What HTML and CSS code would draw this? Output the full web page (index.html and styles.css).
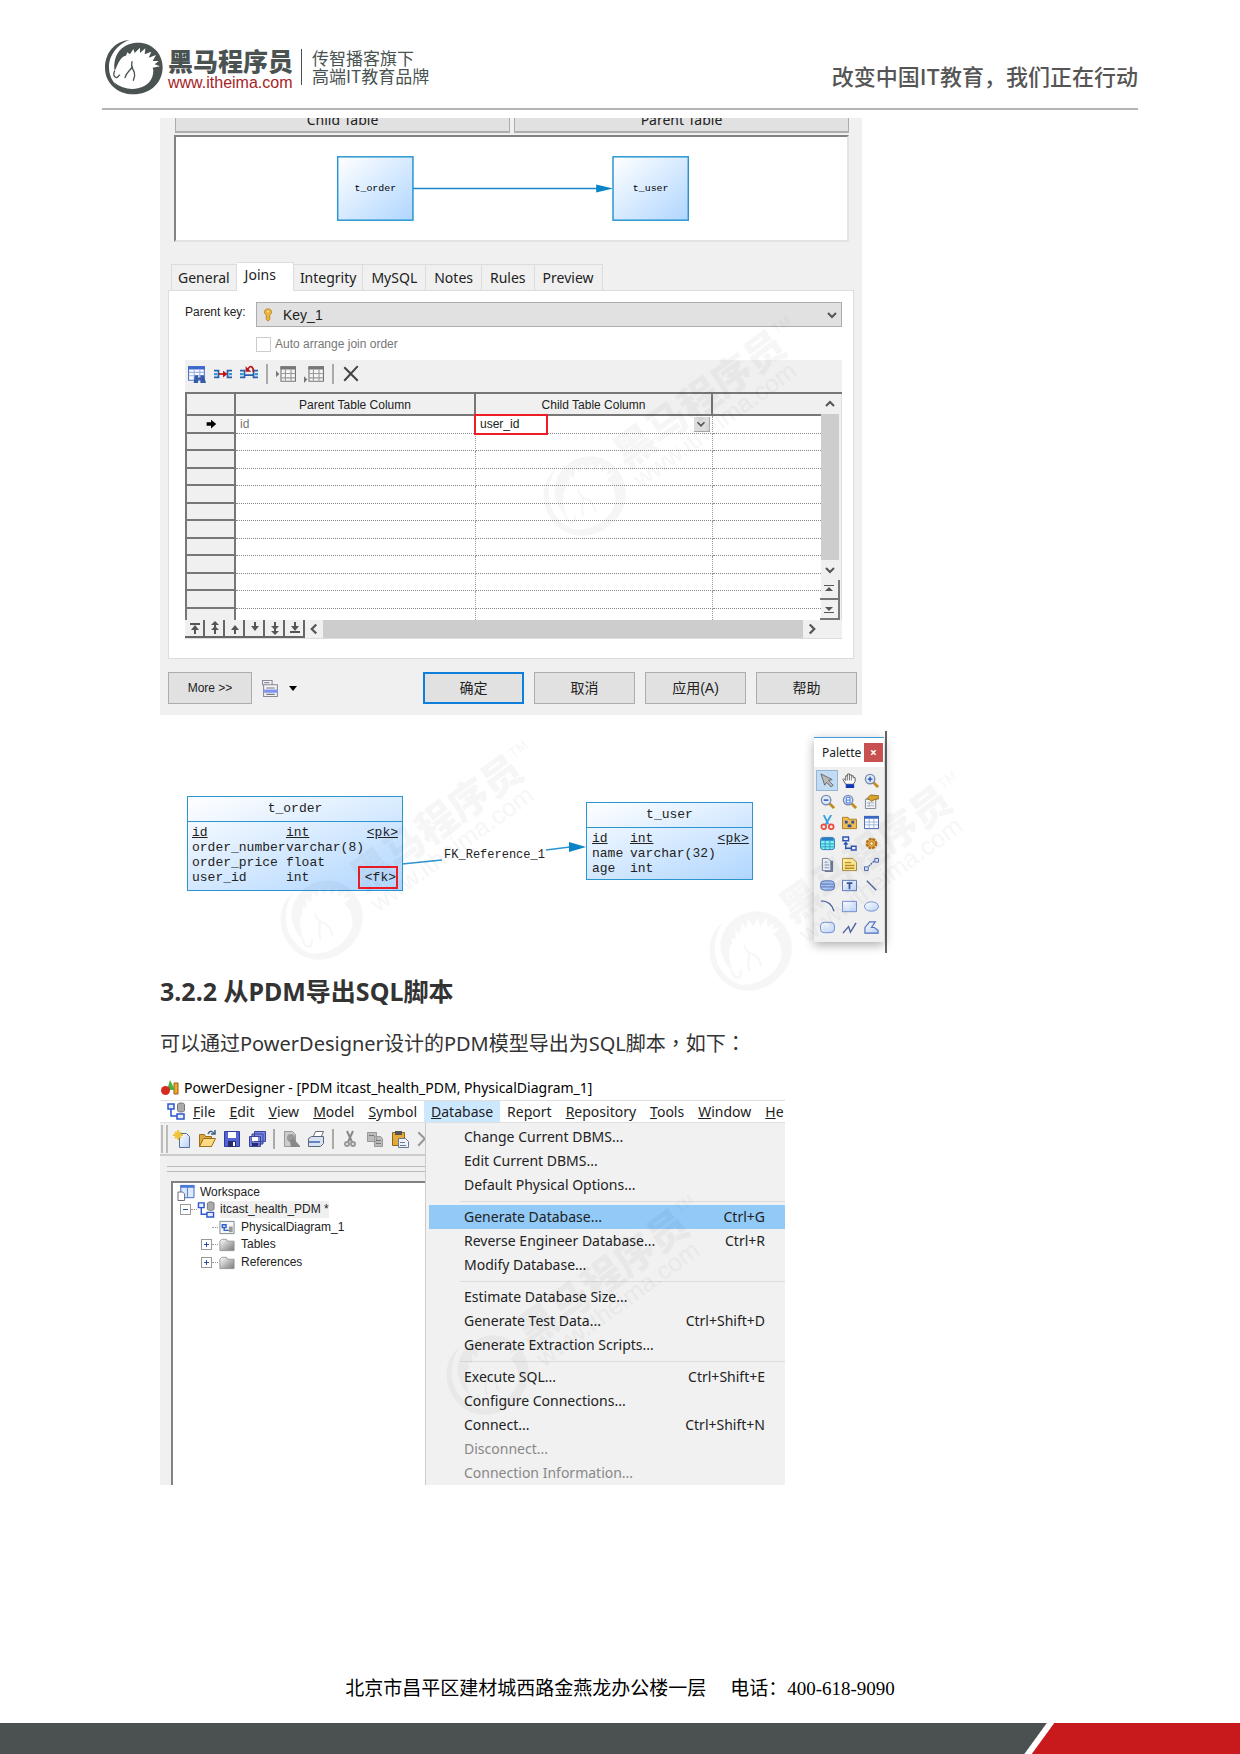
FILE: index.html
```html
<!DOCTYPE html>
<html lang="zh-CN">
<head>
<meta charset="utf-8">
<meta name="viewport" content="width=device-width, initial-scale=1">
<title>从PDM导出SQL脚本</title>
<link rel="stylesheet" href="styles.css">
</head>
<body>
<svg class="sprite" aria-hidden="true">
  <defs>
    <linearGradient id="entity" x1="0" y1="0" x2="1" y2="1"><stop offset="0" stop-color="#fff"/><stop offset="1" stop-color="#b0d6ff"/></linearGradient>
    <linearGradient id="sheet" x1="0" y1="0" x2="1" y2="1"><stop offset="0" stop-color="#fff"/><stop offset="1" stop-color="#b9d0f5"/></linearGradient>
    <linearGradient id="folderGrey" x1="0" y1="0" x2="1" y2="1"><stop offset="0" stop-color="#fff"/><stop offset="1" stop-color="#777"/></linearGradient>
  </defs>
  <symbol id="horse" viewBox="42 54 180 172">
    <path fill="currentColor" d="M120 58C72 62 45 100 45 142C45 190 85 222 130 222C94 212 58 188 57 142C56 104 84 70 120 58Z"/>
    <path fill="currentColor" d="M145 67C185 67 218 98 218 140C218 188 180 222 130 222C104 220 84 208 72 186C94 204 120 209 144 204C172 198 190 180 190 150L188 142L210 138L194 132L206 122L188 122L198 104L176 112L184 94L164 102L166 84L150 98L150 82L134 98L130 86L120 102L112 96L108 106C96 108 90 118 84 130L74 152C70 130 76 100 96 84C110 72 128 67 145 67Z"/>
    <path fill="none" stroke="currentColor" stroke-width="4" stroke-linecap="round" d="M126 124C121 140 128 144 133 156C136 168 132 174 130 180M125 142C120 152 110 154 105 172M74 152C69 160 71 170 79 172C85 172 84 166 89 164"/>
  </symbol>
  <symbol id="i-find" viewBox="0 0 16 16"><path fill="#fff" stroke="#5274c8" d="M.5 1.500h14v12h-14z"/><path fill="#3d66cf" d="M0 1h15v3H0z"/><path stroke="#9db4e4" fill="none" d="M1 6.500h13M1 9.500h13M5.500 4v9M10.500 4v9"/><path fill="#365ba8" d="M5 16l1-7h3v2h2V9h3l2 7h-5v-3H9v3z"/></symbol>
  <symbol id="i-link" viewBox="0 0 16 16"><path fill="none" stroke="#2b5fae" stroke-width="1.500" d="M0 5h4v6H0M16 5h-4v6h4"/><path fill="#2c9be0" d="M0 7h3v2H0zM13 7h3v2h-3z"/><path stroke="#c41212" stroke-width="1.500" d="M4 8h6"/><path fill="#c41212" d="M8 5l4 3-4 3z"/></symbol>
  <symbol id="i-unlink" viewBox="0 0 16 16"><path fill="none" stroke="#2b5fae" stroke-width="1.500" d="M0 5h4v6H0M16 5h-4v6h4M4 9h8"/><path fill="#2c9be0" d="M0 7h3v2H0zM13 7h3v2h-3z"/><path fill="none" stroke="#b81414" stroke-width="1.500" d="M7 4c2-5 5-2 5 2"/><path fill="#b81414" d="M5 1v5h5z"/></symbol>
  <symbol id="i-insert" viewBox="0 0 18 16"><path fill="#f4f4f4" stroke="#777" d="M4.500 1.500h13v13h-13z"/><path fill="#777" d="M4 1h14v3H4zM0 5l3 3-3 3z"/><path stroke="#999" d="M5 7.500h12M5 11.500h12M8.500 4v10M13.500 4v10"/></symbol>
  <symbol id="i-append" viewBox="0 0 18 16"><path fill="#f4f4f4" stroke="#777" d="M4.500 1.500h13v13h-13z"/><path fill="#777" d="M4 1h14v3H4zM0 10l3 3-3 3z"/><path stroke="#999" d="M5 7.500h12M5 11.500h12M8.500 4v10M13.500 4v10"/></symbol>
  <symbol id="i-x" viewBox="0 0 16 16"><path fill="none" stroke="#444" stroke-width="1.800" d="M2 2l12 12M14 1L2 14"/></symbol>
  <symbol id="i-key" viewBox="0 0 16 16"><path fill="#eab43c" stroke="#bd8420" d="M6 8C2 5 4 1 8 1s6 4 2 7v5l-2 2-2-2z"/><circle cx="8" cy="4" r="1" fill="#fff6c0"/></symbol>
  <symbol id="i-arrow" viewBox="0 0 16 16"><path fill="#000" d="M3 6h5V3l6 5-6 5v-3H3z"/></symbol>
  <symbol id="n-first" viewBox="0 0 16 16"><path fill="#555" d="M3 3h10v2H3zM8 5l4 5H9v4H7v-4H4z"/></symbol>
  <symbol id="n-pageup" viewBox="0 0 16 16"><path fill="#555" d="M8 1l4 4H9v2l3 3H9v4H7v-4H4l3-3V5H4z"/></symbol>
  <symbol id="n-up" viewBox="0 0 16 16"><path fill="#555" d="M8 5l4 5H9v4H7v-4H4z"/></symbol>
  <symbol id="n-down" viewBox="0 0 16 16"><path fill="#555" d="M8 11l4-5H9V2H7v4H4z"/></symbol>
  <symbol id="n-pagedown" viewBox="0 0 16 16"><path fill="#555" d="M8 15l4-4H9V9l3-3H9V2H7v4H4l3 3v2H4z"/></symbol>
  <symbol id="n-last" viewBox="0 0 16 16"><path fill="#555" d="M3 13h10v-2H3zM8 11l4-5H9V2H7v4H4z"/></symbol>
  <symbol id="c-up" viewBox="0 0 16 16"><path fill="none" stroke="#555" stroke-width="2" d="M4 10l4-4 4 4"/></symbol>
  <symbol id="c-down" viewBox="0 0 16 16"><path fill="none" stroke="#555" stroke-width="2" d="M4 6l4 4 4-4"/></symbol>
  <symbol id="c-left" viewBox="0 0 16 16"><path fill="none" stroke="#555" stroke-width="2" d="M10 4L6 8l4 4"/></symbol>
  <symbol id="c-right" viewBox="0 0 16 16"><path fill="none" stroke="#555" stroke-width="2" d="M6 4l4 4-4 4"/></symbol>
  <symbol id="v-top" viewBox="0 0 16 16"><path fill="#555" d="M3 4h10v1H3zM8 6l4 4H4z"/></symbol>
  <symbol id="v-end" viewBox="0 0 16 16"><path fill="#555" d="M3 12h10v-1H3zM8 10l4-4H4z"/></symbol>
  <symbol id="i-props" viewBox="0 0 16 16"><path fill="#f4f4f4" stroke="#889" d="M.5.500h9v4h-9zM1.500 4.500h13v11h-13z"/><path fill="#7f94f0" d="M2 9h13v3H2z"/><path stroke="#778" d="M4 7.500h8M4 13.500h8M2 2.500h5"/></symbol>
  <symbol id="p-pointer" viewBox="0 0 16 16"><path fill="#b9b9b9" stroke="#666" d="M1 1l12 6-4 1 5 5-2 2-5-5-2 3z"/></symbol>
  <symbol id="p-hand" viewBox="0 0 16 16"><path fill="#fff" stroke="#555" d="M4 12L1 7l1-1 2 2V3h2V1h2v1h2v1h2v2h2v4l-2 3z"/><path stroke="#777" d="M6 3v5M8 2v6M10 3v5"/><path fill="#1238b4" d="M4 12h9v4H4z"/></symbol>
  <symbol id="p-lens" viewBox="0 0 16 16"><path stroke="#c38a1c" stroke-width="3" d="M10 10l5 5"/><circle cx="6.500" cy="6.500" r="5" fill="#dcebff" stroke="#7d8da8" stroke-width="1.500"/></symbol>
  <symbol id="p-zoomin" viewBox="0 0 16 16"><use href="#p-lens"/><path stroke="#274fa8" stroke-width="1.500" d="M4 6.500h5M6.500 4v5"/></symbol>
  <symbol id="p-zoomout" viewBox="0 0 16 16"><use href="#p-lens"/><path stroke="#274fa8" stroke-width="1.500" d="M4 6.500h5"/></symbol>
  <symbol id="p-zoompage" viewBox="0 0 16 16"><use href="#p-lens"/><path fill="#fff" stroke="#3467e8" d="M4.500 3.500h4v6h-4zM5 6.500h3"/></symbol>
  <symbol id="p-open" viewBox="0 0 16 16"><path fill="#f2f4f8" stroke="#7b8494" d="M1.500 5.500h11v10h-11z"/><path stroke="#a9b3c4" d="M3 9.500h8M3 12.500h8M5.500 8v6"/><path fill="#d9a32e" stroke="#8f6c1e" d="M3 5l4-4 9 1v3l-5 1-3 2-2-2z"/></symbol>
  <symbol id="p-cut" viewBox="0 0 16 16"><path stroke="#36a3e0" stroke-width="2" d="M4 0l5 10M12 0L6 10"/><g fill="none" stroke="#ec4c3c" stroke-width="1.800"><circle cx="4" cy="12.500" r="2.500"/><circle cx="12" cy="12.500" r="2.500"/></g></symbol>
  <symbol id="p-package" viewBox="0 0 16 16"><path fill="#f0bd4f" stroke="#a97c1c" d="M.5 2.500h6l1 2h8v10H.5z"/><path fill="#2e4ba8" d="M3 6h3v3H3zM10 6h3v3h-3zM6 10h4v3H6z"/></symbol>
  <symbol id="p-table" viewBox="0 0 16 16"><path fill="#fff" stroke="#3c5fae" d="M.5 1.500h15v13H.5z"/><path fill="#3c64c4" d="M0 1h16v3H0z"/><path stroke="#9cb2e0" d="M1 7.500h14M1 10.500h14M5.500 4v10M10.500 4v10"/></symbol>
  <symbol id="p-view" viewBox="0 0 16 16"><rect x=".5" y="1.500" width="15" height="13" rx="3" fill="#7ff0ee" stroke="#2a73b8"/><path fill="#2a7cc4" d="M2 2h12l1 3H1z"/><path stroke="#2a9cc4" d="M1 8.500h14M1 11.500h14M5.500 5v9M10.500 5v9"/></symbol>
  <symbol id="p-ref" viewBox="0 0 16 16"><path fill="#eaf1ff" stroke="#2f54b8" stroke-width="1.500" d="M1 1h6v4H1zM10 11h5v4h-5z"/><path fill="none" stroke="#2f54b8" stroke-width="1.500" d="M4 14V6M4 13h6M2 9l2-2 2 2"/></symbol>
  <symbol id="p-proc" viewBox="0 0 16 16"><circle cx="8" cy="8" r="5" fill="#f2b24c" stroke="#b87518" stroke-width="2.500" stroke-dasharray="3 1"/><circle cx="8" cy="8" r="2" fill="#fff0c8" stroke="#b87518"/></symbol>
  <symbol id="p-file" viewBox="0 0 16 16"><path fill="#6d7a96" d="M11 4h3v12H5v-2h6z"/><path fill="#eef2f8" stroke="#6d7a96" d="M2.500 1.500h6l3 3v10h-9z"/><path stroke="#7c8dab" d="M5 5.500h3M5 8.500h5M5 11.500h5"/></symbol>
  <symbol id="p-note" viewBox="0 0 16 16"><path fill="#ffeb9a" stroke="#a58a3c" d="M.5 1.500h11l4 4v9H.5z"/><path stroke="#b98b1a" stroke-width="1.500" d="M3 6h7M3 9h10M3 12h10"/></symbol>
  <symbol id="p-trace" viewBox="0 0 16 16"><path fill="#dbe6ff" stroke="#4560a8" d="M.5 10.500h4v4h-4zM11.500 1.500h4v4h-4z"/><path stroke="#4560a8" stroke-width="1.500" stroke-dasharray="2 1" d="M5 10l6-6"/></symbol>
  <symbol id="p-title" viewBox="0 0 16 16"><rect x=".5" y="3" width="15" height="10" rx="4" fill="#a9c3f3" stroke="#5474b8"/><path stroke="#5474b8" d="M1 6.500h14M1 9.500h14"/></symbol>
  <symbol id="p-text" viewBox="0 0 16 16"><path fill="url(#sheet)" stroke="#5474b8" d="M.5 2.500h15v11H.5z"/><path fill="none" stroke="#3656a4" stroke-width="1.800" d="M5 5.500h6M8 5.500V12"/></symbol>
  <symbol id="p-line" viewBox="0 0 16 16"><path stroke="#4f62a0" stroke-width="1.500" d="M3 3l10 10"/></symbol>
  <symbol id="p-arc" viewBox="0 0 16 16"><path fill="none" stroke="#4f62a0" stroke-width="1.500" d="M1 2c7 0 12 4 14 11"/></symbol>
  <symbol id="p-rect" viewBox="0 0 16 16"><path fill="url(#sheet)" stroke="#6c8bd0" d="M.5 2.500h15v11H.5z"/></symbol>
  <symbol id="p-ellipse" viewBox="0 0 16 16"><ellipse cx="8" cy="8" rx="7.500" ry="5" fill="url(#sheet)" stroke="#6c8bd0"/></symbol>
  <symbol id="p-round" viewBox="0 0 16 16"><rect x=".5" y="2.500" width="15" height="11" rx="4" fill="url(#sheet)" stroke="#6c8bd0"/></symbol>
  <symbol id="p-poly" viewBox="0 0 16 16"><path fill="none" stroke="#4f62a0" stroke-width="1.500" d="M1 14l6-7 2 6 6-10"/></symbol>
  <symbol id="p-polygon" viewBox="0 0 16 16"><path fill="url(#sheet)" stroke="#4f6fc0" stroke-width="1.200" d="M1 14V8l5-6h6l-4 6h3l4 3v3z"/></symbol>
  <symbol id="w-app" viewBox="0 0 18 16"><path fill="#f1a62e" stroke="#9c5d10" d="M13 3h4v11h-4z"/><path fill="#47b347" d="M9 0l5 10H6z"/><circle cx="4.500" cy="10.500" r="4.500" fill="#d42a22"/></symbol>
  <symbol id="w-model" viewBox="0 0 18 18"><path fill="#e6edff" stroke="#2d55cc" stroke-width="1.500" d="M1 2h6v5H1zM10 12h7v5h-7z"/><path fill="none" stroke="#2d55cc" stroke-width="1.500" d="M4 7v7h6"/><path fill="#aaa" stroke="#777" d="M10.500 2.500c0-2 7-2 7 0v6c0 2-7 2-7 0z"/></symbol>
  <symbol id="w-new" viewBox="0 0 18 18"><path fill="url(#sheet)" stroke="#56709c" d="M6.500 3.500h7l3 3v11h-10z"/><path stroke="#f0c437" stroke-width="2" d="M5 0v10M0 5h10M2 2l6 6M8 2L2 8"/></symbol>
  <symbol id="w-open" viewBox="0 0 18 18"><path fill="#e0a83c" stroke="#9a6f1d" d="M1.500 16.500v-12h5l1 2h6v10z"/><path fill="#ffd984" stroke="#9a6f1d" d="M1.500 16.500l4-8h12l-4 8z"/><path fill="none" stroke="#3d5d80" stroke-width="1.500" d="M10 4c2-4 5-3 6 0M13 4h4V0"/></symbol>
  <symbol id="w-save" viewBox="0 0 18 18"><path fill="#5563d4" stroke="#323c96" d="M1.500 1.500h15v15h-15z"/><path fill="#fff" d="M5 2h8v6H5z"/><path fill="#252d70" d="M5 11h8v6H5z"/><path fill="#fff" d="M10 12h2v4h-2z"/></symbol>
  <symbol id="w-saveall" viewBox="0 0 18 18"><path fill="#7a86e0" stroke="#3a4499" d="M6.500 1.500h11v10h-11zM4 4h11v10H4zM1.500 6.500h11v10h-11z"/><path fill="#fff" d="M4 7h6v4H4z"/><path fill="#252d70" d="M4 13h6v3H4z"/></symbol>
  <symbol id="w-preview" viewBox="0 0 18 18"><path fill="#ccc" stroke="#999" d="M2.500 1.500h8l3 3v12h-11z"/><circle cx="9" cy="8" r="4" fill="#999"/><path fill="#888" d="M8 11l3-3 7 8v1h-9z"/></symbol>
  <symbol id="w-print" viewBox="0 0 18 18"><path fill="#fff" stroke="#68717e" d="M5.500 8.500l3-7h8l-3 7z"/><path fill="#d9e2ee" stroke="#596579" d="M1.500 8.500l3-2h12v7l-3 3h-12z"/><path stroke="#6485c0" stroke-width="2" d="M2 12h11"/></symbol>
  <symbol id="w-cut" viewBox="0 0 18 18"><path stroke="#888" stroke-width="2" d="M6 1l5 11M12 1L7 12"/><g fill="none" stroke="#999" stroke-width="2"><circle cx="6" cy="14" r="2"/><circle cx="12" cy="14" r="2"/></g></symbol>
  <symbol id="w-copy" viewBox="0 0 18 18"><path fill="#bbb" stroke="#999" d="M1.500 2.500h9v9h-9zM8.500 6.500h6l2 2v8h-8z"/><path stroke="#777" d="M3 5.500h5M10 10.500h5M10 13.500h5"/></symbol>
  <symbol id="w-paste" viewBox="0 0 18 18"><path fill="#e4a936" stroke="#8c6720" d="M1.500 2.500h12v13h-12z"/><path fill="#555" d="M4 1h7v4H4z"/><path fill="#eef3fb" stroke="#687a98" d="M7.500 8.500h7l3 3v6h-10z"/><path stroke="#687a98" d="M9 12.500h5M9 15.500h6"/></symbol>
  <symbol id="t-space" viewBox="0 0 18 18"><path fill="#dce8fc" stroke="#3c68c4" d="M3.500 1.500h14v13h-14z"/><path fill="#4a7ad8" d="M3 1h15v3H3zM10 4h1v10h-1z"/><path fill="#fff" stroke="#667" d="M.5 8.500h5l2 2v7h-7z"/></symbol>
  <symbol id="t-diagram" viewBox="0 0 18 18"><path fill="#f4f6fa" stroke="#788" d="M1.500 2.500h15v13h-15z"/><path fill="none" stroke="#2d62cc" stroke-width="1.500" d="M4 6h4v3H4zM6 9v3h5"/><path fill="#999" d="M11 8h4v6h-4z"/></symbol>
  <symbol id="t-folder" viewBox="0 0 18 18"><path fill="url(#folderGrey)" stroke="#999" d="M1.500 15.500v-10l2-2h5l1 2h7v10z"/></symbol>
</svg>

<div class="page">
  <header class="masthead">
    <a class="brand" href="#">
      <svg class="brand-mark"><use href="#horse"/></svg>
      <span class="brand-names"><span class="brand-cn">黑马程序员</span><span class="brand-url">www.itheima.com</span></span>
      <span class="brand-slogan"><span>传智播客旗下</span><span>高端IT教育品牌</span></span>
    </a>
    <p class="tagline">改变中国IT教育，我们正在行动</p>
  </header>

  <main class="content">
    <section class="dialog" aria-label="Reference properties">
      <div class="ends"><button type="button">Child Table</button><button type="button">Parent Table</button></div>
      <svg class="join-canvas" viewBox="0 0 673 104" preserveAspectRatio="xMidYMid meet">
        <path stroke="#1c86c8" stroke-width="1.500" d="M236 52h190"/><path fill="#0a84c8" d="M422 48l17 4-17 4z"/>
        <g fill="url(#entity)" stroke="#2b95d2" stroke-width="1.500"><rect x="161" y="20" width="76" height="64"/><rect x="439" y="20" width="76" height="64"/></g>
        <g class="small-mono" text-anchor="middle"><text x="199" y="55">t_order</text><text x="477" y="55">t_user</text></g>
      </svg>
      <div class="tabs" role="tablist">
        <button role="tab">General</button><button role="tab" aria-selected="true">Joins</button><button role="tab">Integrity</button><button role="tab">MySQL</button><button role="tab">Notes</button><button role="tab">Rules</button><button role="tab">Preview</button>
      </div>
      <div class="tab-panel">
        <div class="field">
          <label for="parent-key">Parent key:</label>
          <div class="select-box"><select id="parent-key"><option>Key_1</option></select><svg class="select-key"><use href="#i-key"/></svg><svg class="select-arrow"><use href="#c-down"/></svg></div>
        </div>
        <div class="check"><input type="checkbox" id="auto"><label for="auto">Auto arrange join order</label></div>
        <div class="join-tools">
          <button aria-label="Find"><svg><use href="#i-find"/></svg></button><button aria-label="Join"><svg><use href="#i-link"/></svg></button><button aria-label="Unjoin"><svg><use href="#i-unlink"/></svg></button><i class="rule"></i>
          <button class="wide" aria-label="Insert row"><svg><use href="#i-insert"/></svg></button><button class="wide" aria-label="Add row"><svg><use href="#i-append"/></svg></button><i class="rule"></i><button aria-label="Delete"><svg><use href="#i-x"/></svg></button>
        </div>
        <div class="grid-box">
          <table class="joins">
            <thead><tr><th class="c-mark"></th><th class="c-parent">Parent Table Column</th><th class="c-child">Child Table Column</th><th></th></tr></thead>
            <tbody>
              <tr><th><svg class="row-arrow"><use href="#i-arrow"/></svg></th><td class="muted">id</td><td class="picked"><div class="cell"><span class="marked">user_id</span><button aria-label="Choose column"><svg><use href="#c-down"/></svg></button></div></td><td></td></tr>
              <tr><th></th><td></td><td></td><td></td></tr><tr><th></th><td></td><td></td><td></td></tr>
              <tr><th></th><td></td><td></td><td></td></tr><tr><th></th><td></td><td></td><td></td></tr>
              <tr><th></th><td></td><td></td><td></td></tr><tr><th></th><td></td><td></td><td></td></tr>
              <tr><th></th><td></td><td></td><td></td></tr><tr><th></th><td></td><td></td><td></td></tr>
              <tr><th></th><td></td><td></td><td></td></tr><tr><th></th><td></td><td></td><td></td></tr>
              <tr class="cut"><th></th><td></td><td></td><td></td></tr>
            </tbody>
          </table>
          <div class="v-scroll"><svg><use href="#c-up"/></svg><i class="thumb"></i><svg><use href="#c-down"/></svg><button aria-label="Top"><svg><use href="#v-top"/></svg></button><button aria-label="End"><svg><use href="#v-end"/></svg></button></div>
          <div class="h-scroll">
            <button aria-label="First"><svg><use href="#n-first"/></svg></button><button aria-label="Page up"><svg><use href="#n-pageup"/></svg></button><button aria-label="Up"><svg><use href="#n-up"/></svg></button><button aria-label="Down"><svg><use href="#n-down"/></svg></button><button aria-label="Page down"><svg><use href="#n-pagedown"/></svg></button><button aria-label="Last"><svg><use href="#n-last"/></svg></button>
            <svg><use href="#c-left"/></svg><i class="thumb"></i><svg><use href="#c-right"/></svg>
          </div>
        </div>
      </div>
      <div class="actions">
        <button class="more">More &gt;&gt;</button><svg class="props"><use href="#i-props"/></svg><i class="caret"></i>
        <div class="answers"><button class="default">确定</button><button>取消</button><button>应用(A)</button><button>帮助</button></div>
      </div>
    </section>

    <section class="diagram" aria-label="Physical diagram">
      <svg class="links" width="420" height="120"><path stroke="#2b95d2" stroke-width="1.500" d="M242 53l40-4M386 39l24-3"/><path fill="#0a84c8" d="M409 31l17 5-17 5z"/></svg>
      <div class="entity order">
        <h3>t_order</h3>
        <dl><dt><u>id</u></dt><dd><u>int</u></dd><dd class="tag"><u>&lt;pk&gt;</u></dd>
        <dt>order_number</dt><dd>varchar(8)</dd><dd></dd>
        <dt>order_price</dt><dd>float</dd><dd></dd>
        <dt>user_id</dt><dd>int</dd><dd class="tag"><span class="fk">&lt;fk&gt;</span></dd></dl>
      </div>
      <div class="link-name">FK_Reference_1</div>
      <div class="entity user">
        <h3>t_user</h3>
        <dl><dt><u>id</u></dt><dd><u>int</u></dd><dd class="tag"><u>&lt;pk&gt;</u></dd>
        <dt>name</dt><dd>varchar(32)</dd><dd></dd>
        <dt>age</dt><dd>int</dd><dd></dd></dl>
      </div>
      <div class="palette-side">
        <div class="palette">
          <div class="palette-title"><span>Palette</span><button aria-label="Close">×</button></div>
          <div class="palette-tools">
            <button class="on" aria-label="Pointer"><svg><use href="#p-pointer"/></svg></button><button aria-label="Grabber"><svg><use href="#p-hand"/></svg></button><button aria-label="Zoom in"><svg><use href="#p-zoomin"/></svg></button>
            <button aria-label="Zoom out"><svg><use href="#p-zoomout"/></svg></button><button aria-label="Fit page"><svg><use href="#p-zoompage"/></svg></button><button aria-label="Properties"><svg><use href="#p-open"/></svg></button>
            <button aria-label="Delete"><svg><use href="#p-cut"/></svg></button><button aria-label="Package"><svg><use href="#p-package"/></svg></button><button aria-label="Table"><svg><use href="#p-table"/></svg></button>
            <button aria-label="View"><svg><use href="#p-view"/></svg></button><button aria-label="Reference"><svg><use href="#p-ref"/></svg></button><button aria-label="Procedure"><svg><use href="#p-proc"/></svg></button>
            <button aria-label="File"><svg><use href="#p-file"/></svg></button><button aria-label="Note"><svg><use href="#p-note"/></svg></button><button aria-label="Traceability"><svg><use href="#p-trace"/></svg></button>
            <button aria-label="Title"><svg><use href="#p-title"/></svg></button><button aria-label="Text"><svg><use href="#p-text"/></svg></button><button aria-label="Line"><svg><use href="#p-line"/></svg></button>
            <button aria-label="Arc"><svg><use href="#p-arc"/></svg></button><button aria-label="Rectangle"><svg><use href="#p-rect"/></svg></button><button aria-label="Ellipse"><svg><use href="#p-ellipse"/></svg></button>
            <button aria-label="Rounded rectangle"><svg><use href="#p-round"/></svg></button><button aria-label="Polyline"><svg><use href="#p-poly"/></svg></button><button aria-label="Polygon"><svg><use href="#p-polygon"/></svg></button>
          </div>
        </div>
      </div>
    </section>

    <h2>3.2.2 从PDM导出SQL脚本</h2>
    <p class="lead">可以通过PowerDesigner设计的PDM模型导出为SQL脚本<span class="stop" lang="zh-TW">，</span>如下<span class="stop" lang="zh-TW">：</span></p>

    <section class="designer" aria-label="PowerDesigner">
      <div class="titlebar"><svg><use href="#w-app"/></svg><span>PowerDesigner - [PDM itcast_health_PDM, PhysicalDiagram_1]</span></div>
      <nav class="menubar">
        <svg><use href="#w-model"/></svg>
        <button><u>F</u>ile</button><button><u>E</u>dit</button><button><u>V</u>iew</button><button><u>M</u>odel</button><button><u>S</u>ymbol</button><button class="open"><u>D</u>atabase</button><button>Re<u>p</u>ort</button><button><u>R</u>epository</button><button><u>T</u>ools</button><button><u>W</u>indow</button><button><u>H</u>e</button>
      </nav>
      <div class="workarea">
        <div class="side">
          <div class="toolbar">
            <i class="grip"></i><svg><use href="#w-new"/></svg><svg><use href="#w-open"/></svg><svg><use href="#w-save"/></svg><svg><use href="#w-saveall"/></svg><i class="rule"></i><svg><use href="#w-preview"/></svg><svg><use href="#w-print"/></svg><i class="rule"></i><svg><use href="#w-cut"/></svg><svg><use href="#w-copy"/></svg><svg><use href="#w-paste"/></svg><svg class="faded"><use href="#i-x"/></svg>
          </div>
          <div class="dock"></div>
          <ul class="tree">
            <li><svg><use href="#t-space"/></svg><span>Workspace</span></li>
            <li class="l1"><i class="box minus"></i><i class="dots"></i><svg><use href="#w-model"/></svg><span class="current">itcast_health_PDM *</span></li>
            <li class="l2"><i class="box none"></i><i class="dots"></i><svg><use href="#t-diagram"/></svg><span>PhysicalDiagram_1</span></li>
            <li class="l2"><i class="box plus"></i><i class="dots"></i><svg><use href="#t-folder"/></svg><span>Tables</span></li>
            <li class="l2"><i class="box plus"></i><i class="dots"></i><svg><use href="#t-folder"/></svg><span>References</span></li>
          </ul>
        </div>
        <div class="menu">
          <button>Change Current DBMS...</button><button>Edit Current DBMS...</button><button>Default Physical Options...</button>
          <hr>
          <button class="hot">Generate Database...<kbd>Ctrl+G</kbd></button><button>Reverse Engineer Database...<kbd>Ctrl+R</kbd></button><button>Modify Database...</button>
          <hr>
          <button>Estimate Database Size...</button><button>Generate Test Data...<kbd>Ctrl+Shift+D</kbd></button><button>Generate Extraction Scripts...</button>
          <hr>
          <button>Execute SQL...<kbd>Ctrl+Shift+E</kbd></button><button>Configure Connections...</button><button>Connect...<kbd>Ctrl+Shift+N</kbd></button><button disabled>Disconnect...</button><button disabled>Connection Information...</button>
        </div>
      </div>
    </section>

    <div class="watermark wm-1" aria-hidden="true"><svg><use href="#horse"/></svg><div class="wm-text"><b>黑马程序员</b><span>www.itheima.com</span></div><small>TM</small></div>
    <div class="watermark wm-2" aria-hidden="true"><svg><use href="#horse"/></svg><div class="wm-text"><b>黑马程序员</b><span>www.itheima.com</span></div><small>TM</small></div>
    <div class="watermark wm-3" aria-hidden="true"><svg><use href="#horse"/></svg><div class="wm-text"><b>黑马程序员</b><span>www.itheima.com</span></div><small>TM</small></div>
    <div class="watermark wm-4" aria-hidden="true"><svg><use href="#horse"/></svg><div class="wm-text"><b>黑马程序员</b><span>www.itheima.com</span></div><small>TM</small></div>
  </main>

  <footer class="footer">
    <address><span>北京市昌平区建材城西路金燕龙办公楼一层</span><span>电话：400-618-9090</span></address>
    <div class="band"></div>
  </footer>
</div>
</body>
</html>
```
FILE: styles.css
```css
* { box-sizing: border-box; }
body { margin: 0; background: #fff; color: #333; font-family: "Noto Sans", "Noto Sans CJK SC", sans-serif; }
p, h2, h3, dl, dd, ul { margin: 0; padding: 0; }
button { margin: 0; padding: 0; border: 0; background: none; color: inherit; font: inherit; white-space: nowrap; }
svg { display: block; flex: none; }
.sprite { position: absolute; width: 0; height: 0; }

.page { display: flex; flex-direction: column; min-height: 100vh; overflow: hidden; }

/* Masthead */
.masthead { display: flex; justify-content: space-between; align-items: flex-end; height: 110px; margin: 0 102px; border-bottom: 2px solid #b4b4b4; }
.brand { display: flex; align-items: center; margin-bottom: 12px; color: #4a5352; text-decoration: none; font-family: "Noto Sans CJK SC", sans-serif; }
.brand-mark { width: 60px; height: 58px; margin: 0 4px 0 2px; }
.brand-names { display: flex; flex-direction: column; padding-top: 4px; }
.brand-cn { font-size: 25px; font-weight: 900; line-height: 28px; }
.brand-url { color: #a8231f; font: 16px/18px "Liberation Sans", sans-serif; }
.brand-slogan { display: flex; flex-direction: column; margin-left: 8px; padding-left: 10px; border-left: 1px solid #4a5352; font-size: 17px; line-height: 18px; }
.tagline { margin-bottom: 17px; color: #555; font: 500 22px/32px "Noto Sans CJK SC", sans-serif; }

/* Content column */
.content { position: relative; flex: 1; padding: 8px 102px 0 160px; }

/* Reference dialog */
.dialog { max-width: 702px; height: 597px; padding: 0 5px 0 8px; background: #f0f0f0; color: #222; font: 12px/16px "Liberation Sans", "Noto Sans CJK SC", sans-serif; overflow: hidden; }
.ends { display: flex; gap: 4px; margin: -10px 8px 2px 7px; }
.ends button { flex: 1; height: 25px; border: 1px solid #adadad; border-bottom-width: 2px; background: #e1e1e1; font: 14px/20px "Noto Sans", sans-serif; }
.join-canvas { width: calc(100% - 14px); height: 107px; margin: 0 8px 0 6px; border: 2px solid #828282; border-right-color: #e3e3e3; border-bottom-color: #e3e3e3; background: #fff; }
.small-mono { font: 10px "Liberation Mono", monospace; }
.tabs { display: flex; align-items: flex-end; height: 48px; padding-left: 3px; font: 14px/20px "Noto Sans", sans-serif; }
.tabs button { height: 26px; padding: 0 6px; border: 1px solid #dcdcdc; border-width: 1px 1px 0 0; }
.tabs button:first-child { border-left-width: 1px; }
.tabs button:nth-child(n+4) { padding: 0 8px; }
.tabs [aria-selected] { height: 29px; margin-bottom: -1px; padding: 0 17px 4px 8px; background: #fff; }
.tab-panel { height: 369px; padding: 11px 11px 0 16px; margin-right: 3px; border: 1px solid #dcdcdc; background: #fff; }
.field { display: flex; gap: 12px; }
.field label { padding-top: 2px; width: 59px; white-space: nowrap; }
.select-box { position: relative; flex: 1; }
.select-box select { display: block; width: 100%; height: 25px; padding: 0 26px; border: 1px solid #adadad; border-radius: 0; background: #e1e1e1; appearance: none; color: #222; font: 14px "Liberation Sans", sans-serif; }
.select-key { position: absolute; left: 5px; top: 6px; width: 14px; height: 14px; }
.select-arrow { position: absolute; right: 2px; top: 5px; width: 16px; height: 16px; }
.check { display: flex; align-items: center; gap: 4px; margin: 9px 0 8px 71px; color: #777; }
.check input { width: 15px; height: 15px; margin: 0; border: 1px solid #ccc; background: #fff; appearance: none; }
.join-tools { display: flex; align-items: center; gap: 8px; height: 32px; padding: 0 3px 4px; background: #f0f0f0; }
.join-tools svg { width: 18px; height: 18px; }
.join-tools .wide svg { width: 20px; }
.rule { width: 2px; height: 20px; background: #aaa; }
.grid-box { display: grid; grid-template-columns: 1fr 21px; border-top: 2px solid #777; background: #f0f0f0; }
.joins { width: 100%; table-layout: fixed; border-collapse: separate; border-spacing: 0; background: #fff; color: #222; }
.joins th, .joins td { height: 18px; padding: 0; line-height: 15px; font-weight: 400; }
.joins tr:nth-child(even) th, .joins tr:nth-child(even) td { height: 17px; }
.joins tr.cut th, .joins tr.cut td { height: 11px; border-bottom: 0; }
.joins thead tr th { height: 22px; padding-top: 2px; border-right: 2px solid #777; border-bottom: 2px solid #777; background: #f0f0f0; }
.joins thead th:last-child { border-right: 0; }
.c-mark { width: 51px; }
.c-parent { width: 240px; }
.c-child { width: 237px; }
.joins th:first-child { border-left: 2px solid #777; border-right: 2px solid #777; border-bottom: 2px solid #777; background: #f0f0f0; }
.joins td { padding-left: 4px; border-right: 1px dotted #999; border-bottom: 1px dotted #888; }
.joins td:last-child { border-right: 0; }
.joins .muted { color: #777; }
.joins .picked { padding: 0 2px 0 0; }
.row-arrow { width: 16px; height: 14px; margin: 0 auto; }
.cell { display: flex; justify-content: space-between; align-items: center; height: 15px; }
.marked { width: 74px; margin: -3px 0 -3px -2px; padding: 0 4px; border: 2px solid #ee1c25; line-height: 17px; }
.cell button { width: 16px; height: 15px; border: 1px solid #aaa; border-width: 0 1px 1px 0; background: #ddd; }
.cell svg { width: 14px; height: 14px; }
.v-scroll { display: flex; flex-direction: column; align-items: center; padding: 0 2px 0 0; border-right: 1px solid #ddd; }
.v-scroll > svg { width: 16px; height: 20px; }
.v-scroll .thumb { flex: 1; width: 18px; background: #cdcdcd; }
.v-scroll button { width: 20px; height: 20px; padding-left: 1px; border: solid #777; border-width: 0 2px 2px 0; }
.v-scroll button svg, .h-scroll button svg { width: 16px; height: 16px; }
.h-scroll { grid-column: 1 / -1; display: flex; align-items: stretch; height: 19px; padding-right: 21px; border-bottom: 1px solid #ddd; }
.h-scroll button { width: 20px; padding-left: 2px; border: solid #666; border-width: 0 2px 2px 0; }
.h-scroll > svg { width: 18px; height: 18px; }
.h-scroll .thumb { flex: 1; background: #cdcdcd; }
.actions { display: flex; align-items: center; margin-top: 13px; }
.actions button { height: 32px; border: 1px solid #adadad; background: #e1e1e1; font-size: 14px; }
.actions .more { width: 84px; font-size: 12px; }
.props { width: 17px; height: 17px; margin: 0 10px; }
.caret { border: 4px solid transparent; border-top: 5px solid #000; border-bottom: 0; }
.answers { display: flex; gap: 10px; margin-left: auto; }
.answers button { width: 101px; }
.answers .default { border: 2px solid #0f7fdc; }

/* Entity diagram */
.diagram { position: relative; display: flex; align-items: flex-start; max-width: 727px; height: 223px; margin-top: 16px; color: #222; font: 13px/15px "Liberation Mono", monospace; }
.links { position: absolute; left: 0; top: 80px; overflow: visible; }
.entity { flex: none; border: 1px solid #2b95d2; background: linear-gradient(160deg, #fff, #b0d6ff); }
.entity h3 { height: 25px; border-bottom: 1px solid #2b95d2; font-size: 13px; font-weight: 400; line-height: 23px; text-align: center; }
.entity dl { display: grid; white-space: nowrap; }
.order { width: 216px; height: 95px; margin: 65px 0 0 27px; }
.order dl { grid-template-columns: 94px 1fr 33px; padding: 3px 4px; }
.user { width: 167px; height: 78px; margin: 71px 0 0; }
.user dl { grid-template-columns: 38px 1fr 33px; padding: 3px 4px 3px 5px; }
.tag { text-align: right; }
.fk { display: block; margin: -4px 0 -4px -7px; padding: 2px 0; border: 2px solid #ee1c25; }
.link-name { width: 183px; margin-top: 117px; font-size: 12px; text-align: center; }
.palette-side { margin-left: auto; height: 222px; padding: 6px 1px 0 0; border-right: 2px solid #666; }
.palette { width: 70px; height: 205px; border-top: 1px solid #3d9be0; background: #f0f0f0; box-shadow: 0 3px 10px #0005; }
.palette-title { display: flex; justify-content: space-between; align-items: center; height: 29px; padding: 0 1px 0 8px; background: #fff; font: 12px/18px "Noto Sans", sans-serif; }
.palette-title button { width: 19px; height: 19px; background: #c75050; color: #fff; font-weight: 700; line-height: 16px; }
.palette-tools { display: grid; grid-template-columns: repeat(3, 22px); padding: 3px 2px; }
.palette-tools button { display: grid; place-items: center; height: 21px; }
.palette-tools svg { width: 15px; height: 15px; }
.palette-tools .on { background: #c1dcf3; border: 1px solid #94b6d2; }

h2 { margin-top: 17px; color: #333; font-size: 25px; line-height: 40px; }
.lead { margin-top: 18px; font-size: 20px; line-height: 30px; }
.stop { font-family: "Noto Sans CJK TC", sans-serif; line-height: 20px; }

/* PowerDesigner window */
.designer { max-width: 625px; height: 410px; margin-top: 16px; color: #222; font-size: 14px; line-height: 20px; overflow: hidden; }
.titlebar { display: flex; align-items: center; gap: 5px; height: 25px; color: #000; white-space: nowrap; }
.titlebar svg { width: 18px; height: 16px; margin-left: 1px; }
.menubar { display: flex; height: 23px; border: solid #dfdfdf; border-width: 1px 0; }
.menubar svg { width: 18px; height: 18px; margin: 1px 1px 0 7px; }
.menubar button { padding: 0 7px; }
.menubar .open { background: #cce8ff; }
.workarea { display: grid; grid-template-columns: 265px 1fr; height: 364px; }
.side { display: flex; flex-direction: column; min-width: 0; background: #f0f0f0; overflow: hidden; }
.toolbar { display: flex; align-items: center; gap: 7px; height: 33px; border-bottom: 2px solid #ccc; }
.toolbar svg { width: 18px; height: 18px; }
.faded { opacity: .5; }
.grip { flex: none; width: 7px; height: 28px; margin: 0 -2px 0 1px; border: solid #bbb; border-width: 0 2px; }
.toolbar .rule { flex: none; }
.dock { height: 6px; margin: 10px 0 0 7px; border: solid #bbb; border-width: 1px 0; }
.tree { flex: 1; margin: 9px 0 0 11px; padding: 0 0 0 4px; border: solid #828282; border-width: 2px 0 0 2px; background: #fff; list-style: none; font: 12px/17px "Liberation Sans", sans-serif; }
.tree li { display: flex; align-items: center; height: 18px; }
.tree svg { width: 18px; height: 17px; margin-right: 5px; }
.tree li:nth-child(even) { height: 17px; }
.l1 { padding-left: 3px; }
.l2 { padding-left: 24px; }
.tree .current { background: #f0f0f0; }
.box { width: 11px; height: 11px; border: 1px solid #999; background: linear-gradient(#2c50a8, #2c50a8) center / 5px 1px no-repeat; }
.plus { background: linear-gradient(#2c50a8, #2c50a8) center / 5px 1px no-repeat, linear-gradient(#2c50a8, #2c50a8) center / 1px 5px no-repeat; }
.none { border-color: transparent; background: none; }
.dots { width: 6px; border-top: 1px dotted #999; }
.menu { padding: 2px 0 0 3px; border-left: 1px solid #ccc; background: #f1f1f1; }
.menu button { display: flex; justify-content: space-between; align-items: center; width: 100%; height: 24px; padding: 0 20px 0 35px; }
.menu kbd { font: inherit; }
.menu .hot { background: #91c9f7; }
.menu button:disabled { color: #888; }
.menu hr { height: 8px; margin: 0 0 0 31px; border: 0; background: linear-gradient(#dcdcdc, #dcdcdc) center / 100% 1px no-repeat; }

/* Watermarks lie over the figures */
.watermark { position: absolute; display: flex; align-items: center; height: 86px; color: #000; opacity: .03; transform: rotate(-36deg); transform-origin: 43px 43px; pointer-events: none; font-family: "Noto Sans CJK SC", sans-serif; }
.watermark svg { width: 86px; height: 86px; }
.wm-text { display: flex; flex-direction: column; margin-left: 6px; }
.wm-text b { font-size: 40px; font-weight: 900; line-height: 38px; }
.wm-text span { font: 25px/26px "Liberation Sans", sans-serif; }
.watermark small { align-self: flex-start; padding-top: 10px; font-size: 14px; }
.wm-1 { left: 542px; top: 342px; }
.wm-2 { left: 279px; top: 766px; }
.wm-3 { left: 708px; top: 797px; }
.wm-4 { left: 445px; top: 1221px; }

/* Footer */
.footer address { display: flex; justify-content: center; gap: 24px; margin-bottom: 20px; color: #000; font: normal 19px/28px "Liberation Serif", "Noto Sans CJK SC", serif; }
.band { height: 31px; background: linear-gradient(126deg, #4a5150 calc(100% - 175px), #fff calc(100% - 174px), #fff calc(100% - 169px), #c8191c calc(100% - 168px)); }
```
